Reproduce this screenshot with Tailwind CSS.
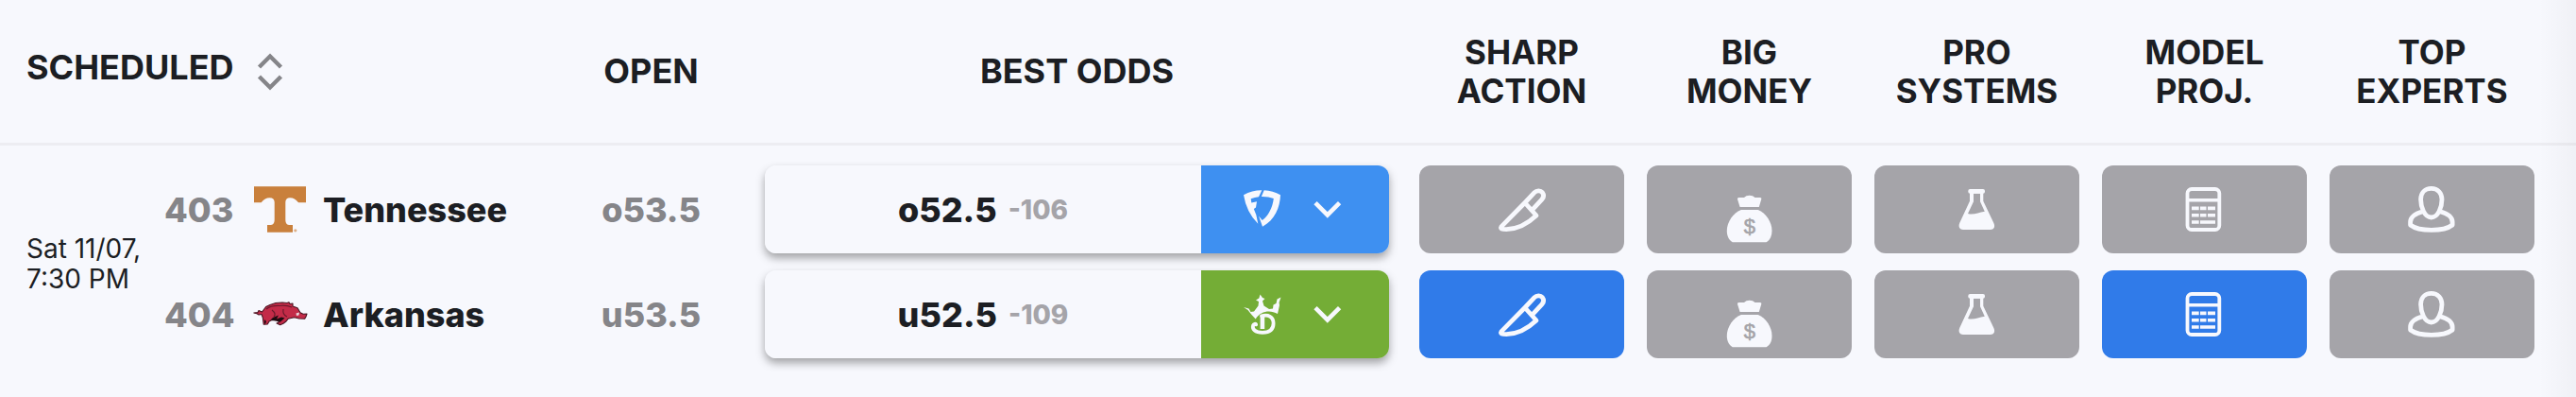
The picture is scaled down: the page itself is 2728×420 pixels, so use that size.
<!DOCTYPE html>
<html lang="en">
<head>
    <meta charset="UTF-8">
    <meta name="viewport" content="width=device-width, initial-scale=1.0">
    <title>Odds Board</title>
    <script src="https://cdn.jsdelivr.net/npm/@tailwindcss/browser@4"></script>
</head>
<body class="relative min-h-screen bg-[#f7f8fd] text-[#1c1e23] font-['Inter',sans-serif]">

    <!-- Shared icons -->
    <svg class="hidden">
        <symbol id="knife" viewBox="0 0 56 56">
            <path fill="none" stroke="currentColor" stroke-width="4.8" stroke-linecap="round" stroke-linejoin="round" d="M31.3 20 6 45.6Q4.4 48 8 48.4 26 50 43 34L31.3 21M31.3 20 41 9.6C43.5 7 47.5 7.4 49.4 9.6 51.2 12 50.8 14.8 49 16.8L38.8 27.8"/>
        </symbol>
        <symbol id="money" viewBox="0 -12 56 80">
            <path fill="currentColor" d="M16.5 15H22Q24 12.7 27.7 12.7T33.5 15H39Q40.8 15 40.3 16.8L37.8 25H17.6L15 16.8Q14.6 15 16.5 15Z"/>
            <path fill="currentColor" d="M18.8 28H36.8C45 31 51.5 41 51.5 50 51.5 56 49.5 60 45.5 62.3H9.8C6 60 3.8 56 3.8 50 3.8 41 10.5 31 18.8 28Z"/>
            <text x="27.8" y="53" text-anchor="middle" font-family="'Liberation Sans Narrow', 'Liberation Sans', sans-serif" font-size="22" font-weight="400" fill="#a5a4a9" stroke="#a5a4a9" stroke-width=".6">$</text>
        </symbol>
        <symbol id="flask" viewBox="0 0 56 56">
            <rect x="18.3" y="6" width="17.7" height="4.8" rx="2" fill="currentColor"/>
            <path fill="currentColor" fill-rule="evenodd" d="M20 10V18.7L9.2 42C7.5 46 9.5 49 13 49H41.8C45.5 49 47.2 46 45.4 42L34.3 18.7V10ZM24 10.8V19.3L18 32C24 34 29 30.5 35.8 29.7L31 19.3V10.8Z"/>
        </symbol>
        <symbol id="calc" viewBox="0 0 56 56">
            <rect x="9.5" y="6" width="33.8" height="43" rx="4.5" fill="none" stroke="currentColor" stroke-width="3.8"/>
            <path fill="currentColor" d="M9 16H44V19.6H9ZM14 24.6H21.7V28.2H14ZM23 24.6H29.5V28.2H23ZM31 24.6H39V28.2H31ZM14 31.9H21.7V35.5H14ZM23 31.9H29.5V35.5H23ZM31 31.9H39V35.5H31ZM14 39.2H21.7V42.8H14ZM23 39.2H39V42.8H23Z"/>
        </symbol>
        <symbol id="expert" viewBox="0 0 56 56">
            <path fill="none" stroke="currentColor" stroke-width="4.8" stroke-linejoin="round" d="M26.8 5.4C33.5 5.4 38 10 38 17 38 25 34 36 26.8 36 19.5 36 15.6 25 15.6 17 15.6 10 20 5.4 26.8 5.4ZM18 29.8C9 32.2 4.6 36 4.6 41V44C14 51.2 40 51.2 49.1 44V41C49.1 36 45 32.2 35.8 29.8"/>
        </symbol>
        <symbol id="chevron" viewBox="0 0 30 20">
            <path fill="none" stroke="currentColor" stroke-width="4.6" d="M2 2.6 14.8 15.4 27.6 2.6"/>
        </symbol>
    </svg>

    <table class="w-full table-fixed border-separate border-spacing-0">
        <colgroup>
            <col class="w-[168px]">
            <col class="w-[421px]">
            <col class="w-[201px]">
            <col>
            <col class="w-[241px]">
            <col class="w-[241px]">
            <col class="w-[241px]">
            <col class="w-[241px]">
            <col class="w-[241px]">
            <col class="w-[32px]">
        </colgroup>
        <thead>
            <tr class="h-[154px] text-[35px] leading-[41px] font-bold *:border-b-3 *:border-[#ededf2]">
                <th colspan="2" class="pl-7">
                    <button class="flex items-center gap-6 pb-2 text-[36px] uppercase">
                        Scheduled
                        <svg class="mt-2 h-10 w-7 text-[#858589]" viewBox="0 0 28 40" fill="none" stroke="currentColor" stroke-width="4.4"><path d="M2.5 15 14 3.5 25.5 15M2.5 25 14 36.5 25.5 25"/></svg>
                    </button>
                </th>
                <th class="text-[36px]">OPEN</th>
                <th class="text-[36px]">BEST ODDS</th>
                <th>SHARP<br>ACTION</th>
                <th>BIG<br>MONEY</th>
                <th>PRO<br>SYSTEMS</th>
                <th>MODEL<br>PROJ.</th>
                <th>TOP<br>EXPERTS</th>
                <th></th>
            </tr>
        </thead>
        <tbody>
            <!-- Tennessee / over -->
            <tr>
                <td rowspan="2" class="pt-4 pl-7 text-[28px] leading-8 whitespace-nowrap">Sat 11/07,<br>7:30 PM</td>
                <td class="pt-[21px] pb-[9px]">
                    <div class="flex items-center pl-1.5 text-[36px] font-extrabold">
                        <span class="w-[94px] text-[#858589]">403</span>
                        <svg class="h-[52px] w-[58px]" viewBox="0 0 58 52" fill="#c9803c"><path d="M1 1.3H56V18.3H48C45 15 43 13.3 39 13.3 36 13.3 34.3 15 34.3 18V36C34.3 40 35.5 41.5 38 42H42V49.7H15V42H19C21.5 41.5 22.7 40 22.7 36V18C22.7 15 21 13.3 17.5 13.3 14 13.3 11.5 15 8.7 18.3H1Z"/><circle cx="44.8" cy="47.8" r="1.6" opacity=".6"/></svg>
                        <a href="#" class="ml-4">Tennessee</a>
                    </div>
                </td>
                <td class="pt-[21px] pb-[9px] text-center text-[36px] font-extrabold text-[#858589]">o53.5</td>
                <td class="px-5 pt-[21px] pb-[9px]">
                    <div class="flex h-[93px] overflow-hidden rounded-xl shadow-[0_5px_10px_rgba(0,0,0,0.35)]">
                        <button class="flex flex-1 items-center justify-center gap-3 bg-[#f7f8fd]">
                            <span class="text-[36px] font-extrabold">o52.5</span>
                            <span class="text-[28px] font-extrabold text-[#a5a4a9]">-106</span>
                        </button>
                        <button aria-label="FanDuel odds" class="flex w-[199px] items-center gap-[34px] bg-[#3e90f1] pl-[45px] text-[#f7f8fd]">
                            <svg class="h-11 w-10" viewBox="0 0 40 44" fill="currentColor"><path d="M0 6.3C6 3 12 1.4 19.3 1.3L16 8.2Q12 8.6 7.7 10.3L8.3 14.6 14 13.2 13 19.6 10.8 21 13.3 27.3 15.3 36.7Q3 25 0 6.3ZM21.7 1.3Q31 1.8 39 6.3C38.6 19 33 33 20 39.7L16 28.5 19.7 33C26 28.5 30.6 20 31.8 10Q26 7.8 18.8 8Z"/></svg>
                            <svg class="h-5 w-[30px]"><use href="#chevron"/></svg>
                        </button>
                    </div>
                </td>
                <td class="px-3 pt-[21px] pb-[9px]"><button aria-label="Sharp action" class="flex h-[93px] w-full items-center justify-center rounded-xl bg-[#a5a4a9] text-[#f7f8fd]"><svg class="size-14"><use href="#knife"/></svg></button></td>
                <td class="px-3 pt-[21px] pb-[9px]"><button aria-label="Big money" class="flex h-[93px] w-full items-center justify-center rounded-xl bg-[#a5a4a9] text-[#f7f8fd]"><svg class="h-20 w-14"><use href="#money"/></svg></button></td>
                <td class="px-3 pt-[21px] pb-[9px]"><button aria-label="Pro systems" class="flex h-[93px] w-full items-center justify-center rounded-xl bg-[#a5a4a9] text-[#f7f8fd]"><svg class="size-14"><use href="#flask"/></svg></button></td>
                <td class="px-3 pt-[21px] pb-[9px]"><button aria-label="Model projection" class="flex h-[93px] w-full items-center justify-center rounded-xl bg-[#a5a4a9] text-[#f7f8fd]"><svg class="size-14"><use href="#calc"/></svg></button></td>
                <td class="px-3 pt-[21px] pb-[9px]"><button aria-label="Top experts" class="flex h-[93px] w-full items-center justify-center rounded-xl bg-[#a5a4a9] text-[#f7f8fd]"><svg class="size-14"><use href="#expert"/></svg></button></td>
                <td></td>
            </tr>
            <!-- Arkansas / under -->
            <tr>
                <td class="py-[9px]">
                    <div class="flex items-center pl-1.5 text-[36px] font-extrabold">
                        <span class="w-[94px] text-[#858589]">404</span>
                        <svg class="h-[28px] w-[58px]" viewBox="0 0 58 28" stroke-linejoin="round">
                            <path fill="#c32b48" stroke="#4a1522" stroke-width="1.1" d="M.8 12 5 11.5 6 9.5 9.5 11 13.7 5.5 18 3.5 24 1.5 31 1 36 1.5 38 .7 39 2.5 42 2 42 5 47 6.7 50 11.7 53 13.3 57 13 56 16 54.7 18.3 48.7 18 43.7 16.7 37 18.3 35 21 32 23.3 28.7 24.7 25 23 28 21.5 25 20 20 19.5 17 21 15.3 24 11.2 24.3 10.3 17 9 13.5 6 14 4 12.8Z"/>
                            <path fill="#1d0b10" d="M21 17 27 14.5 25 18.5 30 16.5 33.5 17.5 29 21.5 25 20.5 18.5 19.5ZM12 19 14 21 13 23.5 12 23.5Z"/>
                            <path fill="none" stroke="#6b1a2b" stroke-width="1.2" d="M14 8Q19 4 28 4.5 35 3.5 41 6M20 9Q25 13 22 16M32 8Q31 14 36 16"/>
                            <path fill="#e8d9de" d="M45.5 12.5 49 11.5 48.5 14.5 46 15Z"/>
                        </svg>
                        <a href="#" class="ml-4">Arkansas</a>
                    </div>
                </td>
                <td class="py-[9px] text-center text-[36px] font-extrabold text-[#858589]">u53.5</td>
                <td class="px-5 py-[9px]">
                    <div class="flex h-[93px] overflow-hidden rounded-xl shadow-[0_5px_10px_rgba(0,0,0,0.35)]">
                        <button class="flex flex-1 items-center justify-center gap-3 bg-[#f7f8fd]">
                            <span class="text-[36px] font-extrabold">u52.5</span>
                            <span class="text-[28px] font-extrabold text-[#a5a4a9]">-109</span>
                        </button>
                        <button aria-label="DraftKings odds" class="flex w-[199px] items-center gap-[34px] bg-[#74ad36] pl-[45px] text-[#f7f8fd]">
                            <svg class="h-11 w-10" viewBox="0 0 40 44" fill="currentColor"><path d="M0 14 5.5 15.5 7.5 19 11 18.5 15.5 12.5 16 8 13 6.5 16.3 4.5 17.5.5 20 4 22.5 5 20 7.5 21.5 12.5 27 16 31 15.5 31.5 11.5 34.5 10 35.5 5.5 39.5 3.5 37.6 9 38 12 36 21C28 16.5 18 18 12.7 26.5L8.5 22 4.5 17Z"/><path d="M17.6 23.5H22.2V37H17.6Z"/><path fill="none" stroke="currentColor" stroke-width="3.8" stroke-linecap="round" d="M19 23.3C26 21.5 31.6 24 31.6 31 31.6 38 27 40.8 20 40.8 12 40.8 9 37 10 33.5 10.7 31.5 12.8 31.2 13.2 32.4"/></svg>
                            <svg class="h-5 w-[30px]"><use href="#chevron"/></svg>
                        </button>
                    </div>
                </td>
                <td class="px-3 py-[9px]"><button aria-label="Sharp action" class="flex h-[93px] w-full items-center justify-center rounded-xl bg-[#307be9] text-[#f7f8fd]"><svg class="size-14"><use href="#knife"/></svg></button></td>
                <td class="px-3 py-[9px]"><button aria-label="Big money" class="flex h-[93px] w-full items-center justify-center rounded-xl bg-[#a5a4a9] text-[#f7f8fd]"><svg class="h-20 w-14"><use href="#money"/></svg></button></td>
                <td class="px-3 py-[9px]"><button aria-label="Pro systems" class="flex h-[93px] w-full items-center justify-center rounded-xl bg-[#a5a4a9] text-[#f7f8fd]"><svg class="size-14"><use href="#flask"/></svg></button></td>
                <td class="px-3 py-[9px]"><button aria-label="Model projection" class="flex h-[93px] w-full items-center justify-center rounded-xl bg-[#307be9] text-[#f7f8fd]"><svg class="size-14"><use href="#calc"/></svg></button></td>
                <td class="px-3 py-[9px]"><button aria-label="Top experts" class="flex h-[93px] w-full items-center justify-center rounded-xl bg-[#a5a4a9] text-[#f7f8fd]"><svg class="size-14"><use href="#expert"/></svg></button></td>
                <td></td>
            </tr>
        </tbody>
    </table>

    <!-- Scroll shade on the right edge -->
    <div class="pointer-events-none absolute inset-y-0 right-0 w-10 bg-linear-to-r from-transparent to-black/3"></div>
</body>
</html>
